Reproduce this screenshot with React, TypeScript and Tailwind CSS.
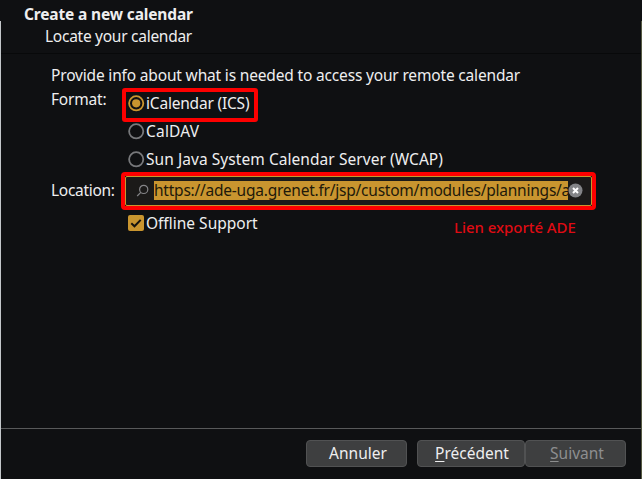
import type { ReactNode } from 'react';

function Radio({ checked, children }: { checked?: boolean; children: ReactNode }) {
  return (
    <div className="flex h-7 items-center">
      <svg className="mr-px shrink-0" width="17" height="17" viewBox="0 0 17 17">
        <circle cx="8.2" cy="8.3" r="7.1" fill="none" stroke={checked ? '#c9952f' : '#77787b'} strokeWidth="1.8" />
        {checked && <circle cx="8.2" cy="8.3" r="4.1" fill="#c9952f" />}
      </svg>
      {children}
    </div>
  );
}

export default function App() {
  return (
    <div className="relative flex h-[479px] w-[642px] flex-col overflow-hidden whitespace-nowrap bg-[#0f1012] font-['Noto_Sans',sans-serif] text-[15.5px] leading-[22px] text-[#eeeeef]">
      <header className="h-[54px] shrink-0 border-b border-[#08090a] pt-[3px]">
        <h1 className="ml-6 font-bold"><span className="tracking-[-0.15px]">Create a new calendar</span></h1>
        <p className="ml-[45px]"><span className="tracking-[-0.27px]">Locate your calendar</span></p>
      </header>

      <main className="flex grow flex-col pl-[51px] pt-[10px]">
        <p className="h-[25px]"><span className="tracking-[-0.17px]">Provide info about what is needed to access your remote calendar</span></p>
        <div className="flex">
          <div className="-mt-px w-[77px]"><span className="tracking-[-0.2px]">Format:</span></div>
          <div className="relative">
            <Radio checked><span className="tracking-[-0.2px]">iCalendar (ICS)</span></Radio>
            <Radio><span className="tracking-[0.2px]">CalDAV</span></Radio>
            <Radio><span className="tracking-[0.06px]">Sun Java System Calendar Server (WCAP)</span></Radio>
            <div className="absolute -left-[6px] -top-px h-[34px] w-[136px] rounded-[3px] border-4 border-[#fd0000]" />
          </div>
        </div>
        <div className="mt-[-1px] flex h-[38px] items-center">
          <div className="-mt-[2px] w-[70px] shrink-0"><span className="tracking-[-0.3px]">Location:</span></div>
          <div className="h-[38px] w-[475px] rounded-[4px] border-4 border-[#fd0000]">
            <div className="flex h-full items-center rounded-[2px] border border-[#c9952f] bg-[#1b1a19] pb-px pl-[10px]">
              <svg className="mr-[5px] shrink-0" width="13" height="14" viewBox="0 0 13 14" fill="none" stroke="#858588" strokeWidth="1.2">
                <circle cx="7.7" cy="5.4" r="4.1" />
                <path d="M4.8 8.4 1.2 12" />
              </svg>
              <div className="h-[19px] w-[414px] bg-[#c9952f] leading-[18px] text-[#21190a]"><span className="tracking-[-0.23px]">https://ade-uga.grenet.fr/jsp/custom/modules/plannings/a</span></div>
              <svg className="shrink-0" width="15" height="15" viewBox="0 0 15 15">
                <circle cx="7.5" cy="7.5" r="7" fill="#838487" />
                <path d="m5 5 5 5m0-5-5 5" stroke="#fff" strokeWidth="2" />
              </svg>
            </div>
          </div>
        </div>
        <div className="-mt-px flex h-7 items-center pl-[77px]">
          <svg className="mr-[2px]" width="16" height="16" viewBox="0 0 16 16">
            <rect width="16" height="16" rx="2" fill="#c9952f" />
            <path d="m3.3 8.2 3.2 3.1 6.2-6.4" fill="none" stroke="#15130f" strokeWidth="2" />
          </svg>
          <div className="w-[308px]"><span>Offline Support</span></div>
          <div className="mt-[7px] text-[15px] font-medium text-[#df0b13]"><span className="tracking-[-0.05px]">Lien exporté ADE</span></div>
        </div>
      </main>

      <footer className="flex h-[51px] shrink-0 border-t border-[#58595a] pl-[306px] pt-[11px]">
        <button className="mr-[10px] h-[27px] w-[101px] rounded-[4px] border border-[#515253] bg-[#3e3f40] pb-[2px] pl-[3px]"><span>Annuler</span></button>
        <button className="h-[27px] w-[108px] rounded-[4px] border border-[#515253] bg-[#3e3f40] pb-[2px] pl-[2px]"><span><u className="underline-offset-2">P</u>récédent</span></button>
        <button className="h-[27px] w-[101px] rounded-[4px] border border-[#515253] bg-[#3e3f40] pb-[2px] pl-[3px] text-[#8d8e8f]"><span><u className="underline-offset-2">S</u>uivant</span></button>
      </footer>

      <div className="absolute bottom-0 left-0 top-[21px] w-px bg-[#c3c7ca]" />
      <div className="absolute bottom-0 right-0 top-[21px] w-px bg-[#555942]" />
    </div>
  );
}
